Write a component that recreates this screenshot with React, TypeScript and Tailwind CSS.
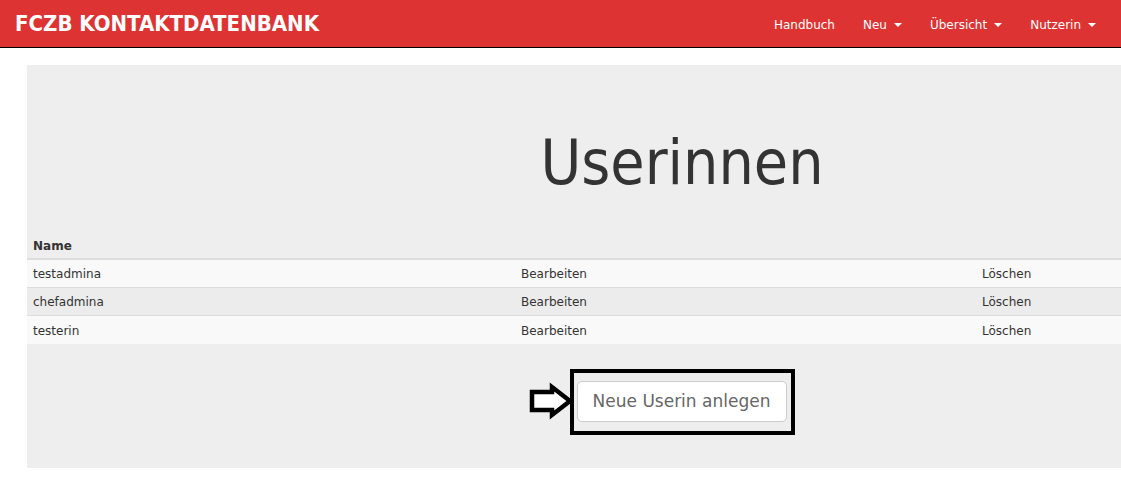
import React from 'react';

const users = ['testadmina', 'chefadmina', 'testerin'];

function NavLink({ label, caret }: { label: string; caret?: boolean }) {
  return (
    <a className="flex items-center px-[14px] pt-[3px] text-[12px] text-white leading-[44px] whitespace-nowrap">
      {label}
      {caret && (
        <span className="ml-[7px] inline-block w-0 h-0 border-t-[4px] border-t-white border-x-[4px] border-x-transparent" />
      )}
    </a>
  );
}

export default function App() {
  return (
    <div className="w-full min-h-[478px] overflow-x-hidden bg-white font-['DejaVu_Sans',sans-serif] text-[#333]">
      {/* Navbar */}
      <nav className="flex items-center h-[48px] bg-[#de3333] border-b border-black">
        <span className="pl-[15px] pb-[1px] text-[22px] font-bold text-white font-['DejaVu_Sans_Condensed','DejaVu_Sans',sans-serif] whitespace-nowrap">
          FCZB KONTAKTDATENBANK
        </span>
        <div className="ml-auto flex items-center pr-[11px]">
          <NavLink label="Handbuch" />
          <NavLink label="Neu" caret />
          <NavLink label="Übersicht" caret />
          <NavLink label="Nutzerin" caret />
        </div>
      </nav>

      {/* Jumbotron */}
      <div className="mt-[17px] ml-[27px] w-[1310px] bg-[#eeeeee] pt-[63px] pb-[33px]">
        <h1 className="text-center text-[62px] leading-[69px] text-[#333] font-['DejaVu_Sans_Condensed','DejaVu_Sans',sans-serif]">
          Userinnen
        </h1>

        {/* Table */}
        <div className="mt-[36px] text-[12px]">
          <div className="grid grid-cols-[488px_461px_1fr] h-[27px] items-center border-b-2 border-[#dddddd]">
            <div className="pl-[6px] font-bold">Name</div>
            <div />
            <div />
          </div>
          {users.map((u, i) => (
            <div
              key={u}
              className={
                'grid grid-cols-[488px_461px_1fr] items-center ' +
                (i === 0
                  ? 'h-[27px] bg-[#f9f9f9]'
                  : i === 1
                  ? 'h-[28px] border-t border-[#dddddd] bg-[#ececec]'
                  : 'h-[29px] pt-[1px] border-t border-[#dddddd] bg-[#f9f9f9]')
              }
            >
              <div className="pl-[6px]">{u}</div>
              <div className="pl-[6px]">Bearbeiten</div>
              <div className="pl-[6px]">Löschen</div>
            </div>
          ))}
        </div>

        {/* Button with highlight */}
        <div className="mt-[25px] flex justify-center">
          <div className="relative border-[4px] border-black pt-[8px] pb-[9px] pl-[3px] pr-[4px]">
            <svg
              className="absolute right-full top-[9px] mr-[-2px]"
              width="48"
              height="38"
              viewBox="0 0 48 38"
            >
              <polygon
                points="4,10 24,10 24,5 42,19 24,33 24,28 4,28"
                fill="white"
                stroke="black"
                strokeWidth="4.5"
                strokeLinejoin="miter"
              />
            </svg>
            <button className="w-[210px] h-[41px] bg-white border border-[#cccccc] rounded-[5px] text-[17px] text-[#666]">
              Neue Userin anlegen
            </button>
          </div>
        </div>
      </div>
    </div>
  );
}
